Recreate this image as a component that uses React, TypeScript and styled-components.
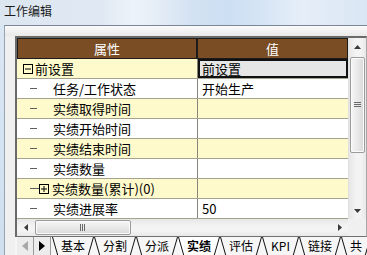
import React from 'react';
import styled, { createGlobalStyle, css } from 'styled-components';

const Global = createGlobalStyle`
  html, body { margin: 0; padding: 0; width: 367px; height: 255px; overflow: hidden; background: #d7e4f2; }
  body { font-family: "Noto Sans CJK SC", "Noto Sans", sans-serif; }
  * { box-sizing: border-box; }
`;

const Window = styled.div`
  width: 367px;
  height: 255px;
  display: flex;
  flex-direction: column;
  overflow: hidden;
`;

const TitleBar = styled.div`
  height: 25px;
  flex: none;
  padding: 3px 0 0 4px;
  font-size: 12px;
  line-height: 16px;
  color: #1b1b1b;
  background: linear-gradient(90deg, #dce6f1 0%, #e0e9f3 28%, #edf3fa 36%, #e3ecf6 44%, #d3e2f2 52%, #cddff3 62%, #d6e5f5 72%, #e6eef8 82%, #d9e6f4 100%);
`;

const Body = styled.div`
  flex: 1;
  display: flex;
  min-height: 0;
`;

const FrameStrip = styled.div`
  width: 4px;
  flex: none;
  background: linear-gradient(180deg, #dbe6f3, #cfdff0);
`;

const Client = styled.div`
  flex: 1;
  border-top: 1px solid #7b8797;
  border-left: 1px solid #97a3b3;
  background: linear-gradient(180deg, #fbfbfb 0px, #f0f0f0 6px, #e9e9e9 10px, #f0f0f0 11px);
  padding: 10px 0 0 10px;
  min-width: 0;
`;

const Sheet = styled.div`
  width: 352px;
  display: flex;
  flex-direction: column;
`;

const GridFrame = styled.div`
  border-top: 2px solid #6a6a6a;
  border-left: 2px solid #6a6a6a;
  border-right: 1px solid #a8a8a8;
  border-bottom: 1px solid #707070;
  display: flex;
  flex-direction: column;
`;

const GridMain = styled.div`
  display: flex;
  height: 181px;
`;

const Table = styled.div`
  width: 331px;
  display: flex;
  flex-direction: column;
  background: #fff;
`;

const Header = styled.div`
  display: flex;
  height: 21px;
  flex: none;
`;

const HeadCell = styled.div<{ $w: number }>`
  width: ${p => p.$w}px;
  background: #7a4d25;
  border: 1px solid #1c1c1c;
  color: #fff;
  font-size: 13px;
  line-height: 19px;
  text-align: center;
`;

const Row = styled.div<{ $alt: boolean }>`
  display: flex;
  height: 20px;
  flex: none;
  border-bottom: 1px solid #a4a391;
  background: ${p => (p.$alt ? '#fffacb' : '#ffffff')};
`;

const NameCell = styled.div`
  width: 181px;
  border-right: 1px solid #85857a;
  display: flex;
  align-items: center;
  font-size: 13px;
  color: #000;
  white-space: nowrap;
  overflow: hidden;
`;

const ValueCell = styled.div<{ $selected?: boolean }>`
  width: 150px;
  display: flex;
  align-items: center;
  padding-left: 4px;
  font-size: 13px;
  color: #000;
  white-space: nowrap;
  ${p => p.$selected && css`
    background: #e6e6e6;
    box-shadow: inset 0 0 0 2px #111;
  `}
`;

const Dash = styled.span<{ $w: number }>`
  display: inline-block;
  width: ${p => p.$w}px;
  height: 1px;
  margin-left: 13px;
  background: #5e5e5e;
  flex: none;
`;

const ExpIcon = styled.svg<{ $ml: number }>`
  flex: none;
  margin-left: ${p => p.$ml}px;
  display: block;
`;

const Label = styled.span<{ $ml: number }>`
  margin-left: ${p => p.$ml}px;
`;

const VScroll = styled.div`
  width: 18px;
  display: flex;
  flex-direction: column;
  background: linear-gradient(90deg, #e6e6e6, #f3f3f3 40%, #f3f3f3 70%, #e8e8e8);
  border-left: 1px solid #e0e0e0;
`;

const ArrowBtn = styled.div<{ $w: number; $h: number }>`
  width: ${p => p.$w}px;
  height: ${p => p.$h}px;
  flex: none;
  display: flex;
  align-items: center;
  justify-content: center;
`;

const VTrack = styled.div`
  flex: 1;
  padding-top: 2px;
  display: flex;
  flex-direction: column;
  align-items: center;
`;

const VThumb = styled.div`
  width: 15px;
  height: 96px;
  border: 1px solid #9b9b9b;
  border-radius: 2px;
  background: linear-gradient(90deg, #f6f6f6, #e9e9e9 50%, #d9d9d9);
  box-shadow: inset 0 0 0 1px #fbfbfb;
  display: flex;
  align-items: center;
  justify-content: center;
`;

const HScrollRow = styled.div`
  display: flex;
  height: 17px;
`;

const HScroll = styled.div`
  width: 331px;
  display: flex;
  align-items: center;
  background: linear-gradient(180deg, #e6e6e6, #f3f3f3 40%, #f3f3f3 70%, #e8e8e8);
`;

const HTrack = styled.div`
  flex: 1;
  height: 100%;
  padding: 1px 0 0 1px;
  display: flex;
`;

const HThumb = styled.div`
  width: 96px;
  height: 15px;
  border: 1px solid #9b9b9b;
  border-radius: 2px;
  background: linear-gradient(180deg, #f6f6f6, #e9e9e9 50%, #d9d9d9);
  box-shadow: inset 0 0 0 1px #fbfbfb;
  display: flex;
  align-items: center;
  justify-content: center;
`;

const Corner = styled.div`
  width: 18px;
  background: #f0f0f0;
`;

const TabBar = styled.div`
  height: 18px;
  display: flex;
  padding-left: 2px;
  background: #f6f6f6;
  overflow: hidden;
`;

const NavBtn = styled.div`
  width: 17px;
  flex: none;
  display: flex;
  align-items: center;
  justify-content: center;
  background: #ececec;
  border-right: 1px solid #9a9a9a;
`;

const Tab = styled.div<{ $active?: boolean }>`
  position: relative;
  flex: none;
  height: 18px;
  padding: 0 9px;
  font-size: 12px;
  line-height: 17px;
  color: #000;
  white-space: nowrap;
  font-weight: ${p => (p.$active ? 700 : 400)};
  background: ${p => (p.$active ? '#ffffff' : 'transparent')};
  clip-path: ${p => (p.$active ? 'polygon(-2px 0, calc(100% + 2px) 0, calc(100% - 4px) 100%, 4px 100%)' : 'none')};
  &::before, &::after {
    content: '';
    position: absolute;
    top: 0;
    bottom: 0;
    width: 0;
  }
  &::before {
    left: 0;
    border-left: 1px solid #111;
    transform-origin: top left;
    transform: skewX(16deg);
  }
  &::after {
    right: 0;
    border-right: 1px solid #111;
    transform-origin: top right;
    transform: skewX(-16deg);
  }
`;

const Tabs = styled.div`
  display: flex;
  margin-left: 1px;
  padding-right: 4px;
`;

const Expander = ({ open, ml }: { open: boolean; ml: number }) => (
  <ExpIcon $ml={ml} width="10" height="10" viewBox="0 0 10 10">
    <rect x="0.5" y="0.5" width="9" height="9" fill="none" stroke="#000" />
    <line x1="2" y1="5" x2="8" y2="5" stroke="#000" />
    {!open && <line x1="5" y1="2" x2="5" y2="8" stroke="#000" />}
  </ExpIcon>
);

const Tri = ({ dir, color = '#3a3a3a' }: { dir: 'up' | 'down' | 'left' | 'right'; color?: string }) => {
  const pts = {
    up: '0,4 3.5,0 7,4',
    down: '0,0 7,0 3.5,4',
    left: '4,0 4,7 0,3.5',
    right: '0,0 4,3.5 0,7',
  }[dir];
  const vertical = dir === 'up' || dir === 'down';
  return (
    <svg width={vertical ? 7 : 4} height={vertical ? 4 : 7} viewBox={vertical ? '0 0 7 4' : '0 0 4 7'}>
      <polygon points={pts} fill={color} />
    </svg>
  );
};

const NavTri = ({ dir, color }: { dir: 'left' | 'right'; color: string }) => (
  <svg width="6" height="10" viewBox="0 0 6 10">
    <polygon points={dir === 'left' ? '6,0 6,10 0,5' : '0,0 6,5 0,10'} fill={color} />
  </svg>
);

const VGrip = () => (
  <svg width="7" height="6" viewBox="0 0 7 6">
    <line x1="0" y1="0.5" x2="7" y2="0.5" stroke="#6a6a6a" />
    <line x1="0" y1="2.5" x2="7" y2="2.5" stroke="#6a6a6a" />
    <line x1="0" y1="4.5" x2="7" y2="4.5" stroke="#6a6a6a" />
  </svg>
);

const HGrip = () => (
  <svg width="6" height="7" viewBox="0 0 6 7">
    <line x1="0.5" y1="0" x2="0.5" y2="7" stroke="#6a6a6a" />
    <line x1="2.5" y1="0" x2="2.5" y2="7" stroke="#6a6a6a" />
    <line x1="4.5" y1="0" x2="4.5" y2="7" stroke="#6a6a6a" />
  </svg>
);

type RowData = { kind: 'root' | 'leaf' | 'group'; name: string; value?: string; selected?: boolean };

const rows: RowData[] = [
  { kind: 'root', name: '前设置', value: '前设置', selected: true },
  { kind: 'leaf', name: '任务/工作状态', value: '开始生产' },
  { kind: 'leaf', name: '实绩取得时间' },
  { kind: 'leaf', name: '实绩开始时间' },
  { kind: 'leaf', name: '实绩结束时间' },
  { kind: 'leaf', name: '实绩数量' },
  { kind: 'group', name: '实绩数量(累计)(0)' },
  { kind: 'leaf', name: '实绩进展率', value: '50' },
];

const tabs = ['基本', '分割', '分派', '实绩', '评估', 'KPI', '链接', '共'];

export default function App() {
  return (
    <Window>
      <Global />
      <TitleBar>工作编辑</TitleBar>
      <Body>
        <FrameStrip />
        <Client>
          <Sheet>
            <GridFrame>
              <GridMain>
                <Table>
                  <Header>
                    <HeadCell $w={180}>属性</HeadCell>
                    <HeadCell $w={151}>值</HeadCell>
                  </Header>
                  {rows.map((r, i) => (
                    <Row key={i} $alt={i % 2 === 0}>
                      <NameCell>
                        {r.kind === 'root' && (
                          <>
                            <Expander open ml={6} />
                            <Label $ml={2}>{r.name}</Label>
                          </>
                        )}
                        {r.kind === 'leaf' && (
                          <>
                            <Dash $w={7} />
                            <Label $ml={16}>{r.name}</Label>
                          </>
                        )}
                        {r.kind === 'group' && (
                          <>
                            <Dash $w={9} />
                            <Expander open={false} ml={0} />
                            <Label $ml={3}>{r.name}</Label>
                          </>
                        )}
                      </NameCell>
                      <ValueCell $selected={r.selected}>{r.value ?? ''}</ValueCell>
                    </Row>
                  ))}
                </Table>
                <VScroll>
                  <ArrowBtn $w={17} $h={17}>
                    <Tri dir="up" />
                  </ArrowBtn>
                  <VTrack>
                    <VThumb>
                      <VGrip />
                    </VThumb>
                  </VTrack>
                  <ArrowBtn $w={17} $h={17}>
                    <Tri dir="down" />
                  </ArrowBtn>
                </VScroll>
              </GridMain>
              <HScrollRow>
                <HScroll>
                  <ArrowBtn $w={17} $h={17}>
                    <Tri dir="left" />
                  </ArrowBtn>
                  <HTrack>
                    <HThumb>
                      <HGrip />
                    </HThumb>
                  </HTrack>
                  <ArrowBtn $w={17} $h={17}>
                    <Tri dir="right" />
                  </ArrowBtn>
                </HScroll>
                <Corner />
              </HScrollRow>
            </GridFrame>
            <TabBar>
              <NavBtn>
                <NavTri dir="left" color="#a8a8a8" />
              </NavBtn>
              <NavBtn>
                <NavTri dir="right" color="#000" />
              </NavBtn>
              <Tabs>
                {tabs.map(t => (
                  <Tab key={t} $active={t === '实绩'}>{t}</Tab>
                ))}
              </Tabs>
            </TabBar>
          </Sheet>
        </Client>
      </Body>
    </Window>
  );
}
